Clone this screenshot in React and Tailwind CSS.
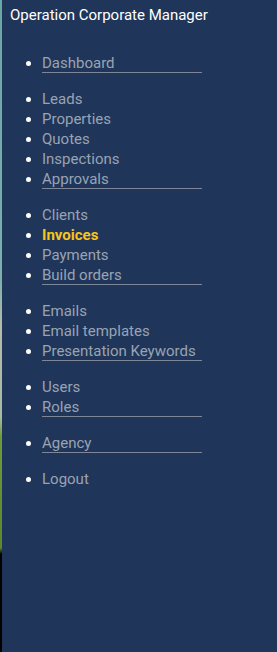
const groups = [
  ["Dashboard"],
  ["Leads", "Properties", "Quotes", "Inspections", "Approvals"],
  ["Clients", "Invoices", "Payments", "Build orders"],
  ["Emails", "Email templates", "Presentation Keywords"],
  ["Users", "Roles"],
  ["Agency"],
  ["Logout"],
];

export default function App() {
  return (
    <div className="flex h-[652px] w-[277px] overflow-hidden" style={{ fontFamily: "Roboto, 'Noto Sans', sans-serif" }}>
      <div className="w-[2px] shrink-0 bg-[linear-gradient(to_bottom,#6aa6a6_0%,#7fb0ad_43%,#b5bcaa_50%,#a9b9a2_64%,#6f9a3a_67%,#5a8a2a_84%,#000_85%,#000_100%)]" />
      <nav className="flex-1 bg-[#1f365a] pt-[5px]">
        <div className="pl-2 text-[15px] leading-5 text-white">Operation Corporate Manager</div>
        <div className="mt-[28px]">
          {groups.map((items, gi) => (
            <ul key={gi} className="mb-4 list-disc pl-10 marker:text-white">
              {items.map((item, i) => {
                const last = i === items.length - 1 && item !== "Logout";
                const active = item === "Invoices";
                return (
                  <li key={item} className="text-[15px] leading-5">
                    <a
                      className={
                        "block h-5 w-[160px] " +
                        (last ? "border-b border-[#7d8799] " : "") +
                        (active ? "font-bold text-[#f7c51b]" : "text-[#9aa3b2]")
                      }
                    >
                      {item}
                    </a>
                  </li>
                );
              })}
            </ul>
          ))}
        </div>
      </nav>
    </div>
  );
}
